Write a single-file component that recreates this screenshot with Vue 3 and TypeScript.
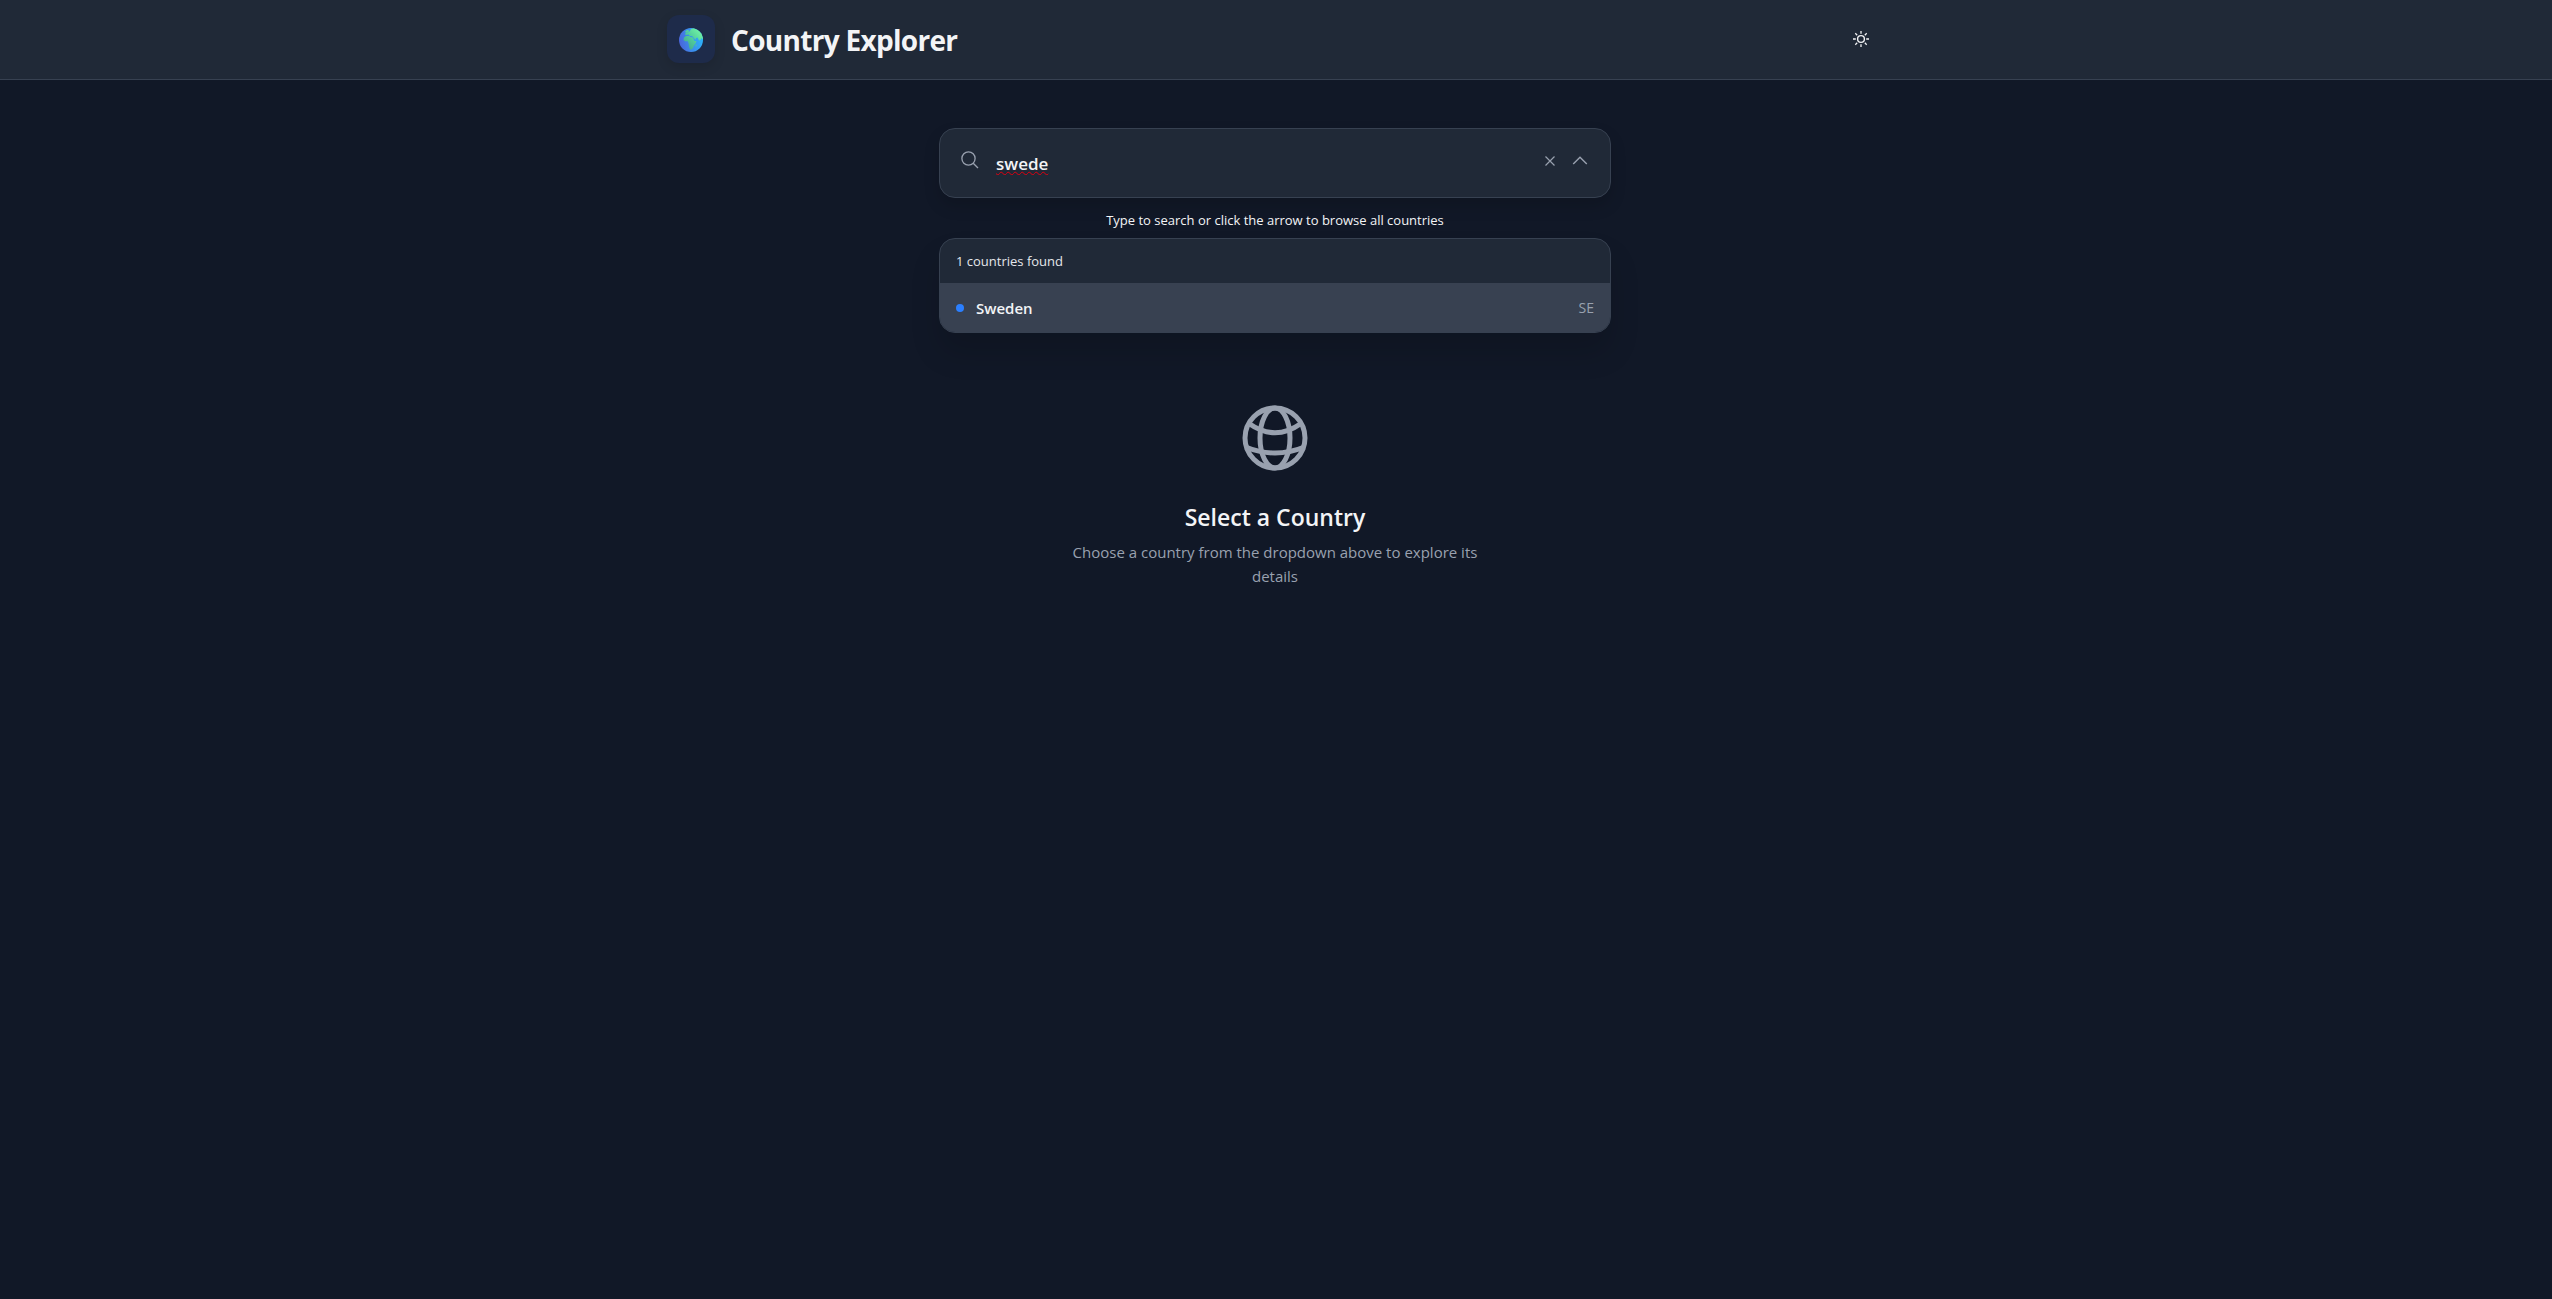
<script setup lang="ts">
import { computed, ref } from 'vue'

interface Country {
  name: string
  code: string
}

const countries: Country[] = [
  { name: 'Sweden', code: 'SE' },
]

const query = ref('swede')
const open = ref(true)

const matches = computed(() =>
  countries.filter((c) => c.name.toLowerCase().includes(query.value.toLowerCase())),
)

function clear() {
  query.value = ''
}
</script>

<template>
  <div class="page">
    <header class="topbar">
      <div class="topbar-inner">
        <div class="brand">
          <span class="logo">
            <svg viewBox="0 0 24 24" width="24" height="24" aria-hidden="true">
              <defs>
                <linearGradient id="sea" x1="0" y1="0.6" x2="1" y2="0.4">
                  <stop offset="0" stop-color="#4a63d8" />
                  <stop offset="0.5" stop-color="#3b8fee" />
                  <stop offset="1" stop-color="#2cb4fb" />
                </linearGradient>
                <linearGradient id="land" x1="0" y1="1" x2="1" y2="0">
                  <stop offset="0" stop-color="#3f9f8c" />
                  <stop offset="0.5" stop-color="#52cf9c" />
                  <stop offset="1" stop-color="#7dffa8" />
                </linearGradient>
                <clipPath id="disc"><circle cx="12" cy="12" r="12" /></clipPath>
              </defs>
              <g clip-path="url(#disc)">
                <rect width="24" height="24" fill="url(#sea)" />
                <path
                  fill="url(#land)"
                  d="M6 3.5 8 2l2 .5L9.500 4 7 5zM12 1l3-1h5l4 6v5.500l-1.500-1.500-1 2-1.500.5-1.500-3-1.500.5-.5 2-2-2.500-1.500-1.500H11L9.500 6.500 6.500 7 6 5.500l3-1 2-1.500zM5 9.500l2-1.500h3l1.500 1 2.500.5 1.500 3.500h2l-1 2.500-1.500 2-1 2.500-1.500 1.500h-1.500l-1-3-.5-3.500L8.500 13l-2 .5L4.500 12zM16.500 17l1-1v2l-1 1z"
                />
              </g>
            </svg>
          </span>
          <h1>Country Explorer</h1>
        </div>
        <button class="icon-btn theme" type="button" aria-label="Toggle theme">
          <svg viewBox="0 0 20 20" width="20" height="20" fill="none" stroke="currentColor" aria-hidden="true">
            <circle cx="10" cy="10" r="3.4" stroke-width="1.4" />
            <path
              stroke-width="1.3"
              d="M10 2v2.8M10 15.2V18M2 10h2.8M15.2 10H18M4.3 4.3l1.9 1.9M13.8 13.8l1.9 1.9M4.3 15.7l1.9-1.9M13.8 6.2l1.9-1.9"
            />
          </svg>
        </button>
      </div>
    </header>

    <main class="content">
      <section class="finder">
        <div class="search-box">
          <svg class="search-icon" viewBox="0 0 20 20" width="20" height="20" fill="none" stroke="currentColor" stroke-width="1.3" aria-hidden="true">
            <circle cx="8.5" cy="7.5" r="6.6" />
            <path d="M13.2 12.2 18 17" />
          </svg>
          <input id="country-search" v-model="query" type="text" aria-label="Search countries" spellcheck="false" />
          <button class="icon-btn" type="button" aria-label="Clear search" @click="clear">
            <svg viewBox="0 0 16 16" width="16" height="16" fill="none" stroke="currentColor" stroke-width="1.2" aria-hidden="true">
              <path d="M3.5 3.5l9 9M12.5 3.5l-9 9" />
            </svg>
          </button>
          <button class="icon-btn" type="button" aria-label="Toggle country list" @click="open = !open">
            <svg viewBox="0 0 16 16" width="16" height="16" fill="none" stroke="currentColor" stroke-width="1.4" aria-hidden="true">
              <path d="M1.2 11 8 4.2l6.8 6.8" />
            </svg>
          </button>
        </div>
        <p class="hint">Type to search or click the arrow to browse all countries</p>
        <div v-if="open" class="dropdown">
          <div class="count">{{ matches.length }} countries found</div>
          <button v-for="c in matches" :key="c.code" class="option" type="button">
            <span class="dot"></span>
            <span class="name">{{ c.name }}</span>
            <span class="code">{{ c.code }}</span>
          </button>
        </div>
      </section>

      <section class="empty">
        <svg viewBox="0 0 66 66" width="66" height="66" fill="none" stroke="currentColor" stroke-width="5" aria-hidden="true">
          <circle cx="33" cy="33" r="30" />
          <ellipse cx="33" cy="33" rx="15" ry="30" />
          <path d="M7 18.5Q33 37 59 18.5M3.5 42Q33 54 62.5 42" />
        </svg>
        <h2>Select a Country</h2>
        <p>Choose a country from the dropdown above to explore its details</p>
      </section>
    </main>
  </div>
</template>

<style>
body {
  background: #111827;
}
</style>

<style scoped>
* {
  box-sizing: border-box;
}

.page {
  min-height: 100vh;
  background: #111827;
  color: #f3f4f6;
  font-family: 'Open Sans', 'Noto Sans', sans-serif;
  font-size: 15px;
  line-height: 24px;
}

h1,
h2,
p {
  margin: 0;
}

button,
input {
  font: inherit;
  color: inherit;
  background: none;
  border: 0;
  padding: 0;
}

.topbar {
  padding-right: 2px;
  background: #202937;
  border-bottom: 1px solid #374151;
}

.topbar-inner {
  max-width: 1280px;
  margin: 0 auto;
  padding: 15px 32px 16px;
  display: flex;
  align-items: center;
  justify-content: space-between;
}

.brand {
  display: flex;
  align-items: center;
  gap: 16px;
}

.logo {
  width: 48px;
  height: 48px;
  border-radius: 12px;
  background: #1e2b4a;
  box-shadow: 0 4px 12px rgba(0, 0, 0, 0.12);
  display: flex;
  align-items: center;
  justify-content: center;
}

.logo svg {
  margin-top: 2px;
}

h1 {
  padding-top: 2px;
  font-size: 28px;
  line-height: 36px;
  font-weight: 700;
  letter-spacing: -0.025em;
}

.icon-btn {
  display: flex;
  align-items: center;
  justify-content: center;
  color: #99a1af;
}

.theme {
  width: 44px;
  height: 44px;
  color: #f3f4f6;
}

.content {
  display: flex;
  flex-direction: column;
  align-items: center;
  padding: 48px 26px 48px 24px;
}

.finder {
  width: 100%;
  max-width: 672px;
}

.search-box {
  height: 70px;
  display: flex;
  align-items: center;
  gap: 14px;
  padding: 0 22px 0 20px;
  background: #202937;
  border: 1px solid #374151;
  border-radius: 16px;
  box-shadow: 0 8px 16px rgba(0, 0, 0, 0.15);
}

.search-icon {
  color: #99a1af;
  margin: 0 2px 4px 0;
}

.search-box .icon-btn {
  margin-bottom: 4px;
}

input {
  flex: 1;
  min-width: 0;
  height: 32px;
  font-size: 17px;
  font-weight: 600;
  outline: none;
  text-decoration: underline wavy #e0000f 1px;
  text-decoration-skip-ink: none;
}

.hint {
  margin-top: 8px;
  text-align: center;
  font-size: 13px;
  line-height: 28px;
}

.dropdown {
  margin-top: 4px;
  background: #202937;
  border: 1px solid #374151;
  border-radius: 16px;
  overflow: hidden;
  box-shadow: 0 20px 30px rgba(0, 0, 0, 0.14);
}

.count {
  padding: 10px 16px;
  font-size: 13px;
  line-height: 24px;
  color: #e5e7eb;
}

.option {
  display: flex;
  align-items: center;
  width: 100%;
  height: 49px;
  padding: 0 16px;
  gap: 12px;
  background: #384151;
  text-align: left;
}

.dot {
  width: 8px;
  height: 8px;
  border-radius: 50%;
  background: #2b7fff;
}

.name {
  flex: 1;
  font-weight: 600;
}

.code {
  font-size: 14px;
  color: #99a1af;
}

.empty {
  margin-top: 72px;
  max-width: 448px;
  display: flex;
  flex-direction: column;
  align-items: center;
  text-align: center;
  color: #99a1af;
}

h2 {
  margin-top: 30px;
  font-size: 23px;
  line-height: 32px;
  font-weight: 600;
  color: #f3f4f6;
}

.empty p {
  margin-top: 7px;
}
</style>
